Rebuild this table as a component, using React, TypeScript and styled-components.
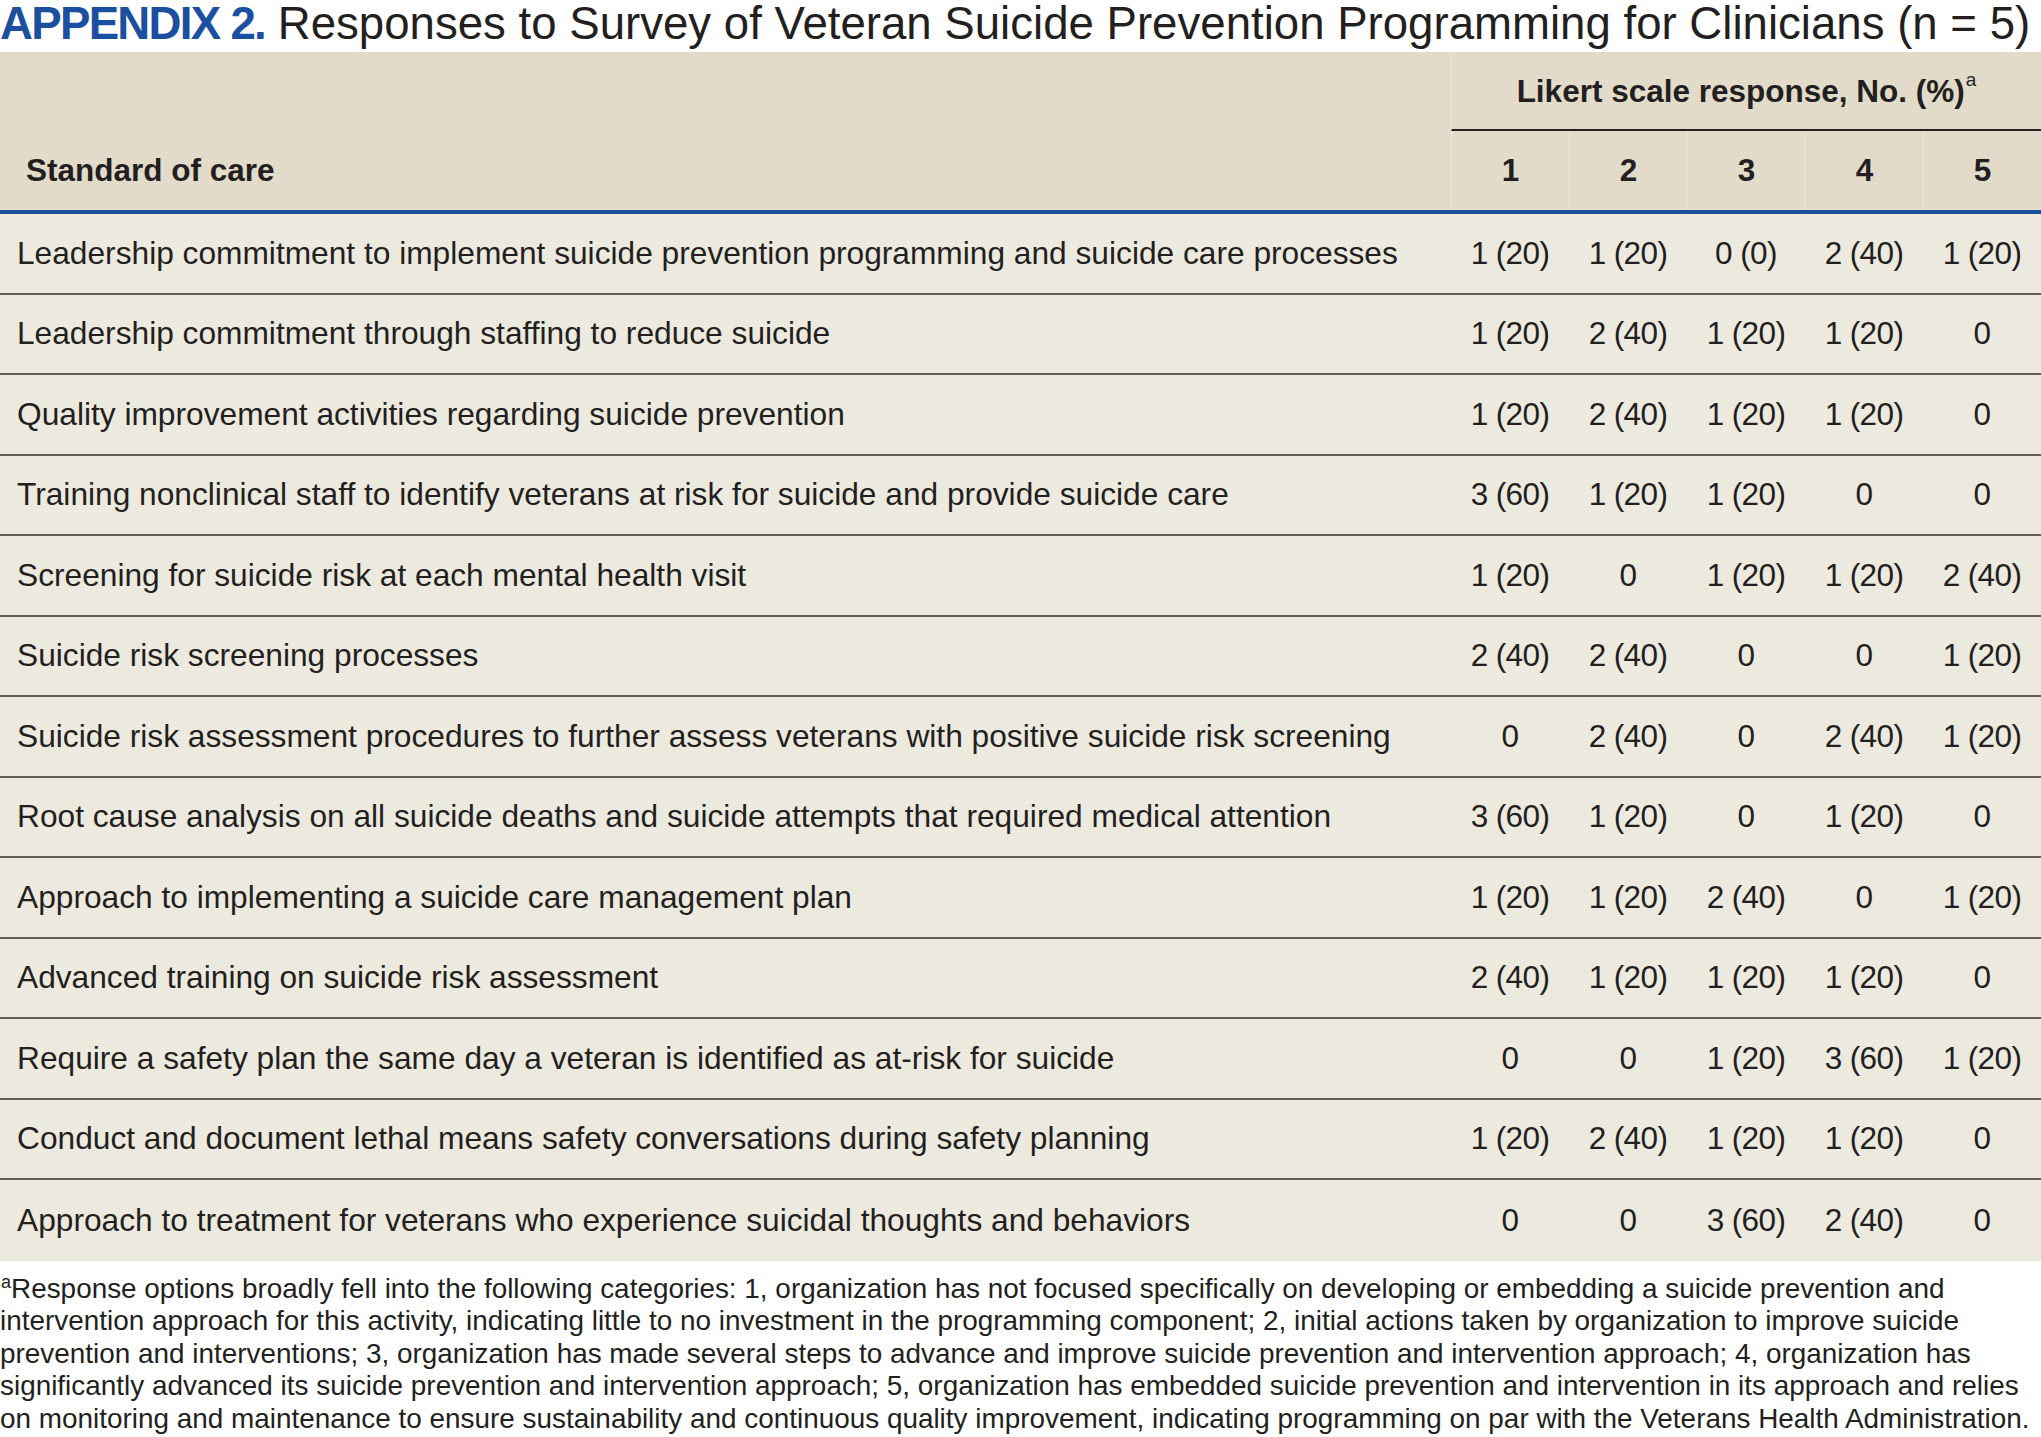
import React from 'react';
import styled, { createGlobalStyle } from 'styled-components';

type Row = {
  label: string;
  values: string[];
};

const rows: Row[] = [
  { label: 'Leadership commitment to implement suicide prevention programming and suicide care processes', values: ['1 (20)', '1 (20)', '0 (0)', '2 (40)', '1 (20)'] },
  { label: 'Leadership commitment through staffing to reduce suicide', values: ['1 (20)', '2 (40)', '1 (20)', '1 (20)', '0'] },
  { label: 'Quality improvement activities regarding suicide prevention', values: ['1 (20)', '2 (40)', '1 (20)', '1 (20)', '0'] },
  { label: 'Training nonclinical staff to identify veterans at risk for suicide and provide suicide care', values: ['3 (60)', '1 (20)', '1 (20)', '0', '0'] },
  { label: 'Screening for suicide risk at each mental health visit', values: ['1 (20)', '0', '1 (20)', '1 (20)', '2 (40)'] },
  { label: 'Suicide risk screening processes', values: ['2 (40)', '2 (40)', '0', '0', '1 (20)'] },
  { label: 'Suicide risk assessment procedures to further assess veterans with positive suicide risk screening', values: ['0', '2 (40)', '0', '2 (40)', '1 (20)'] },
  { label: 'Root cause analysis on all suicide deaths and suicide attempts that required medical attention', values: ['3 (60)', '1 (20)', '0', '1 (20)', '0'] },
  { label: 'Approach to implementing a suicide care management plan', values: ['1 (20)', '1 (20)', '2 (40)', '0', '1 (20)'] },
  { label: 'Advanced training on suicide risk assessment', values: ['2 (40)', '1 (20)', '1 (20)', '1 (20)', '0'] },
  { label: 'Require a safety plan the same day a veteran is identified as at-risk for suicide', values: ['0', '0', '1 (20)', '3 (60)', '1 (20)'] },
  { label: 'Conduct and document lethal means safety conversations during safety planning', values: ['1 (20)', '2 (40)', '1 (20)', '1 (20)', '0'] },
  { label: 'Approach to treatment for veterans who experience suicidal thoughts and behaviors', values: ['0', '0', '3 (60)', '2 (40)', '0'] },
];

const footnoteLines = [
  'Response options broadly fell into the following categories: 1, organization has not focused specifically on developing or embedding a suicide prevention and',
  'intervention approach for this activity, indicating little to no investment in the programming component; 2, initial actions taken by organization to improve suicide',
  'prevention and interventions; 3, organization has made several steps to advance and improve suicide prevention and intervention approach; 4, organization has',
  'significantly advanced its suicide prevention and intervention approach; 5, organization has embedded suicide prevention and intervention in its approach and relies',
  'on monitoring and maintenance to ensure sustainability and continuous quality improvement, indicating programming on par with the Veterans Health Administration.',
];

const GlobalStyle = createGlobalStyle`
  html, body {
    margin: 0;
    padding: 0;
    background: #fff;
  }
  body {
    font-family: 'Liberation Sans', Arial, sans-serif;
    color: #231f20;
  }
`;

const Page = styled.div`
  width: 2041px;
`;

const Title = styled.div`
  height: 52px;
  line-height: 47px;
  font-size: 45.6px;
  white-space: nowrap;
  color: #231f20;
`;

const TitleLabel = styled.span`
  font-weight: bold;
  color: #1b4fa0;
  letter-spacing: -1.7px;
`;

const Table = styled.div`
  display: flex;
  flex-direction: column;
`;

const Grid = styled.div`
  display: grid;
  grid-template-columns: 1451px repeat(5, 1fr);
`;

const Head = styled(Grid)`
  background: #e2dbca;
  border-bottom: 4px solid #1c4f9b;
  grid-template-rows: 79px 79px;
`;

const HeadCell = styled.div<{ $wide?: boolean; $left?: boolean }>`
  display: flex;
  align-items: center;
  justify-content: ${(p) => (p.$left ? 'flex-start' : 'center')};
  padding-left: ${(p) => (p.$left ? '26px' : '0')};
  font-size: 31.5px;
  font-weight: bold;
  grid-column: ${(p) => (p.$wide ? '2 / span 5' : 'auto')};
  border-left: ${(p) => (p.$left ? 'none' : '1px solid #ece7da')};
`;

const Span = styled(HeadCell)`
  border-bottom: 2px solid #231f20;
  padding-top: 2px;
`;

const Sup = styled.sup<{ $size: number; $lift: number }>`
  font-size: ${(p) => p.$size}px;
  font-weight: normal;
  vertical-align: baseline;
  line-height: 1;
  position: relative;
  top: -${(p) => p.$lift}px;
  margin-left: 1px;
`;

const Body = styled.div`
  background: #ece9df;
  display: flex;
  flex-direction: column;
`;

const BodyRow = styled(Grid)<{ $last: boolean }>`
  height: 80.5px;
  box-sizing: border-box;
  border-bottom: ${(p) => (p.$last ? 'none' : '2px solid #5f5e56')};
`;

const Label = styled.div`
  display: flex;
  align-items: center;
  padding-left: 17px;
  font-size: 31.7px;
  white-space: nowrap;
`;

const Value = styled.div`
  display: flex;
  align-items: center;
  justify-content: center;
  font-size: 31.5px;
  white-space: nowrap;
  letter-spacing: -0.6px;
`;

const Footnote = styled.div`
  padding-top: 12px;
  font-size: 27.9px;
  line-height: 32.5px;
  white-space: nowrap;
`;

const App = () => {
  return (
    <Page>
      <GlobalStyle />
      <Title>
        <TitleLabel>APPENDIX 2.</TitleLabel> Responses to Survey of Veteran Suicide Prevention Programming for Clinicians (n = 5)
      </Title>
      <Table>
        <Head>
          <HeadCell $left />
          <Span $wide>
            Likert scale response, No. (%)<Sup $size={19} $lift={12}>a</Sup>
          </Span>
          <HeadCell $left>Standard of care</HeadCell>
          {[1, 2, 3, 4, 5].map((n) => (
            <HeadCell key={n}>{n}</HeadCell>
          ))}
        </Head>
        <Body>
          {rows.map((row, i) => (
            <BodyRow key={row.label} $last={i === rows.length - 1}>
              <Label>{row.label}</Label>
              {row.values.map((v, j) => (
                <Value key={j}>{v}</Value>
              ))}
            </BodyRow>
          ))}
        </Body>
      </Table>
      <Footnote>
        {footnoteLines.map((line, i) => (
          <div key={i}>
            {i === 0 && <Sup $size={18} $lift={10}>a</Sup>}
            {line}
          </div>
        ))}
      </Footnote>
    </Page>
  );
};

export default App;
